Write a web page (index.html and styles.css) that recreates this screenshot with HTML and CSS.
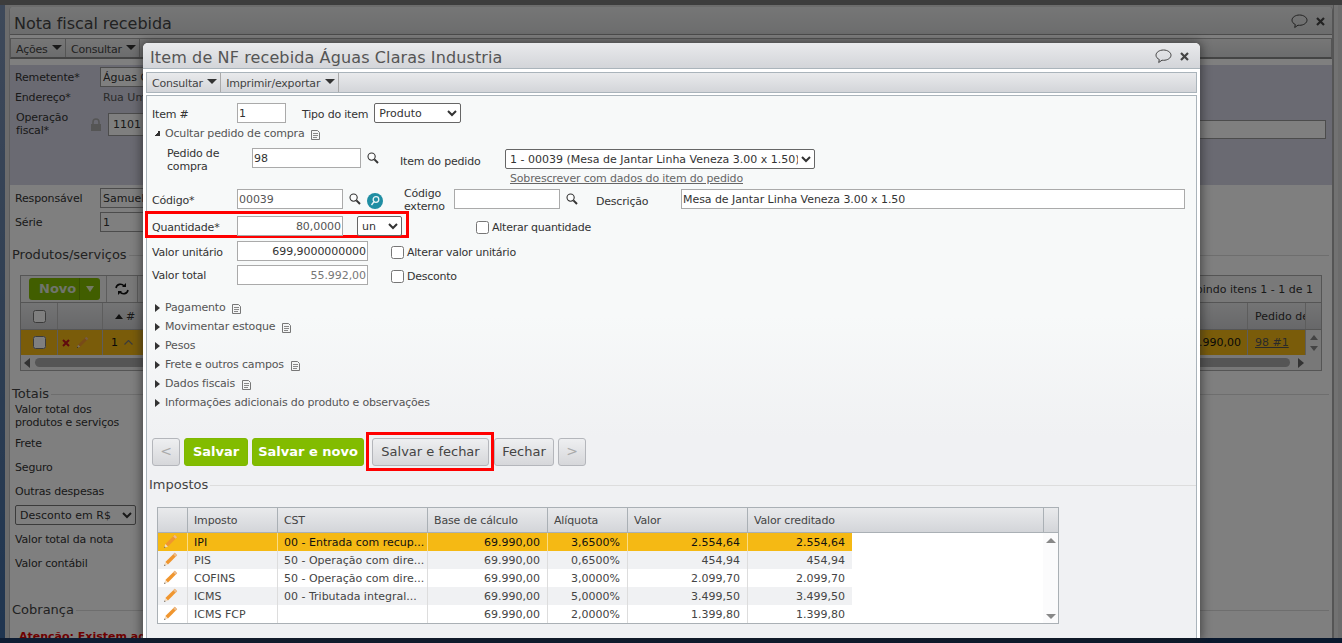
FILE: index.html
```html
<!DOCTYPE html>
<html lang="pt">
<head>
<meta charset="utf-8">
<title>Nota fiscal recebida</title>
<link rel="stylesheet" href="styles.css">
</head>
<body>
<svg width="0" height="0" class="defs">
  <symbol id="i-search" viewBox="0 0 12 12"><circle cx="4.6" cy="4.6" r="3.6" fill="#fff" fill-opacity=".6" stroke="#333" stroke-width="1.1"/><path d="M7.4 7.4l3.6 3.6" stroke="#333" stroke-width="2"/></symbol>
  <symbol id="i-note" viewBox="0 0 9 10"><path d="M.5.500h6l2 2v7h-8z" fill="#f4f5f5" stroke="#777"/><path d="M2 3.500h5M2 5.500h5M2 7.500h4" stroke="#888"/></symbol>
  <symbol id="i-pencil" viewBox="0 0 14 14"><path d="M11 .8l2.2 2.2-8.6 8.6-2.4-2.2z" fill="#f0962f"/><path d="M11 .8l2.2 2.2-1.5 1.500-2.2-2.200z" fill="#eabb8c"/><path d="M2.200 9.400l2.400 2.200-3.600 1.400z" fill="#f3dcc0"/><path d="M1.600 11.600l-.6 1.400 1.400-.6z" fill="#333"/></symbol>
  <symbol id="i-bubble" viewBox="0 0 17 15"><path d="M8.5 1C4.400 1 1 3.300 1 6.200c0 1.800 1.300 3.400 3.300 4.300l-.6 3 3.300-2.300c.5.100 1 .1 1.500.1 4.100 0 7.500-2.300 7.500-5.100S12.600 1 8.500 1z" fill="none" stroke="currentColor"/></symbol>
  <symbol id="i-close" viewBox="0 0 9 9"><path d="M1 1l7 7M8 1l-7 7" stroke="currentColor" stroke-width="2.200"/></symbol>
</svg>

<div class="desk">
  <div class="topstrip"></div>
  <div class="middle">
    <div class="sidebar"></div>
    <main class="win">
      <header class="win-title">
        <h1>Nota fiscal recebida</h1>
        <span class="win-actions">
          <svg class="ic-bubble"><use href="#i-bubble"/></svg>
          <svg class="ic-close"><use href="#i-close"/></svg>
        </span>
      </header>
      <nav class="win-bar">
        <span class="menu">Ações <i class="caret"></i></span>
        <span class="menu">Consultar <i class="caret"></i></span>
      </nav>
      <section class="tint">
        <div class="bg-row"><label class="bg-label">Remetente*</label><input class="bg-input w-remet" value="Águas Claras Industria"></div>
        <div class="bg-row r-end"><label class="bg-label">Endereço*</label><span class="addr">Rua Um</span></div>
        <div class="bg-row r-op">
          <label class="bg-label op-label">Operação<br>fiscal*</label>
          <svg class="lock" viewBox="0 0 12 13"><path d="M3 6V4a3 3 0 0 1 6 0v2" fill="none" stroke="#aaa" stroke-width="1.600"/><path d="M1 6h10v7H1z" fill="#aaa"/></svg>
          <input class="bg-input w-op" value="1101 - Compra">
          <input class="bg-input w-far">
        </div>
      </section>
      <div class="bg-row r-resp"><label class="bg-label">Responsável</label><input class="bg-input w-remet" value="Samuel"></div>
      <div class="bg-row r-serie"><label class="bg-label">Série</label><input class="bg-input w-remet" value="1"></div>

      <div class="legend l-prod"><span>Produtos/serviços</span></div>
      <div class="bg-grid">
        <div class="bg-grid-bar">
          <span class="novo"><b>Novo</b><i class="novo-arrow"></i></span>
          <span class="refresh-cell"><svg class="refresh" viewBox="0 0 14 12"><path d="M1 5a4.500 4.500 0 0 1 8-2M13 7a4.500 4.500 0 0 1-8 2" fill="none" stroke="#111" stroke-width="1.600"/><path d="M7 4h4V0zM7 8H3v4z" fill="#111"/></svg></span>
          <span class="grid-count">Exibindo itens 1 - 1 de 1</span>
        </div>
        <div class="bg-grid-head">
          <span class="c-check"><input type="checkbox"></span>
          <span class="c-act"></span>
          <span class="c-num"><i class="caret-up"></i> #</span>
          <span class="c-fill"></span>
          <span class="c-ped">Pedido de</span>
          <span class="c-sb"></span>
        </div>
        <div class="bg-grid-row">
          <span class="c-check"><input type="checkbox"></span>
          <span class="c-act"><svg class="ic-x" viewBox="0 0 8 8"><path d="M1 1l6 6M7 1l-6 6" stroke="#c0141c" stroke-width="2"/></svg><svg class="ic-pen-dim"><use href="#i-pencil"/></svg></span>
          <span class="c-num">1<svg class="chev" viewBox="0 0 9 5"><path d="M.5 4.500l4-4 4 4" fill="none" stroke="#777" stroke-width="1.200"/></svg></span>
          <span class="c-fill val">69.990,00</span>
          <span class="c-ped"><a>98 #1</a></span>
          <span class="c-sb sb-cell"><i class="arr-up"></i><i class="arr-down"></i></span>
        </div>
        <div class="bg-grid-scroll"><i class="arr-left"></i><span class="thumb"></span><i class="arr-right"></i></div>
      </div>

      <div class="legend l-tot"><span>Totais</span></div>
      <div class="bg-lines">
        <div class="t-two">Valor total dos<br>produtos e serviços</div>
        <div class="t-line first">Frete</div>
        <div class="t-line">Seguro</div>
        <div class="t-line">Outras despesas</div>
        <select class="t-select"><option>Desconto em R$</option></select>
        <div class="t-line first">Valor total da nota</div>
        <div class="t-line">Valor contábil</div>
      </div>
      <div class="legend l-cob"><span>Cobrança</span></div>
      <div class="alert">Atenção: Existem adiantamentos</div>
    </main>
    <div class="rail"></div>
  </div>
  <div class="botstrip"></div>
</div>

<div class="dim"></div>

<div class="modal">
  <header class="m-title">
    <h2>Item de NF recebida Águas Claras Industria</h2>
    <span class="win-actions">
      <svg class="ic-bubble"><use href="#i-bubble"/></svg>
      <svg class="ic-close"><use href="#i-close"/></svg>
    </span>
  </header>
  <nav class="m-bar">
    <span class="menu">Consultar <i class="caret"></i></span>
    <span class="menu">Imprimir/exportar <i class="caret"></i></span>
  </nav>
  <div class="m-body">
    <div class="f-row r1">
      <label class="lb w85 d2">Item #</label>
      <input class="in w49" value="1">
      <label class="lb tipo">Tipo do item</label>
      <select class="sel w87"><option>Produto</option></select>
    </div>
    <div class="toggle open"><i class="tri-open"></i><span>Ocultar pedido de compra</span><svg class="ic-note"><use href="#i-note"/></svg></div>
    <div class="f-row r3">
      <label class="lb pedido">Pedido de<br>compra</label>
      <input class="in w109" value="98">
      <svg class="ic-search"><use href="#i-search"/></svg>
      <label class="lb item-ped">Item do pedido</label>
      <div class="sel-stack">
        <select class="sel w310"><option>1 - 00039 (Mesa de Jantar Linha Veneza 3.00 x 1.50)</option></select>
        <a class="over">Sobrescrever com dados do item do pedido</a>
      </div>
    </div>
    <div class="f-row r4">
      <label class="lb w85 d2">Código*</label>
      <input class="in w106 muted" value="00039">
      <svg class="ic-search"><use href="#i-search"/></svg>
      <svg class="ic-key" viewBox="0 0 16 16"><circle cx="8" cy="8" r="8" fill="#1f8ea3"/><circle cx="9" cy="6.500" r="2.800" fill="none" stroke="#e8f4f6" stroke-width="1.300"/><path d="M7 8.600L4.500 12" stroke="#e8f4f6" stroke-width="1.400"/></svg>
      <label class="lb ext">Código<br>externo</label>
      <input class="in w106">
      <svg class="ic-search"><use href="#i-search"/></svg>
      <label class="lb desc">Descrição</label>
      <input class="in w504" value="Mesa de Jantar Linha Veneza 3.00 x 1.50">
    </div>
    <div class="f-row r5">
      <div class="hl-qty">
        <label class="lb qty-l">Quantidade*</label>
        <input class="in w106 right muted" value="80,0000">
        <select class="sel w45"><option>un</option></select>
      </div>
      <label class="chk c1"><input type="checkbox">Alterar quantidade</label>
    </div>
    <div class="f-row r6">
      <label class="lb w85 d1">Valor unitário</label>
      <input class="in w131 right" value="699,9000000000">
      <label class="chk c2"><input type="checkbox">Alterar valor unitário</label>
    </div>
    <div class="f-row r7">
      <label class="lb w85">Valor total</label>
      <input class="in w131 right grey" value="55.992,00">
      <label class="chk c2"><input type="checkbox">Desconto</label>
    </div>
    <div class="sections">
      <div class="toggle"><i class="tri"></i><span>Pagamento</span><svg class="ic-note"><use href="#i-note"/></svg></div>
      <div class="toggle"><i class="tri"></i><span>Movimentar estoque</span><svg class="ic-note"><use href="#i-note"/></svg></div>
      <div class="toggle"><i class="tri"></i><span>Pesos</span></div>
      <div class="toggle"><i class="tri"></i><span>Frete e outros campos</span><svg class="ic-note"><use href="#i-note"/></svg></div>
      <div class="toggle"><i class="tri"></i><span>Dados fiscais</span><svg class="ic-note"><use href="#i-note"/></svg></div>
      <div class="toggle"><i class="tri"></i><span>Informações adicionais do produto e observações</span></div>
    </div>
    <div class="actions">
      <button class="btn nav">&lt;</button>
      <button class="btn green b-s">Salvar</button>
      <button class="btn green b-sn">Salvar e novo</button>
      <span class="hl-btn"><button class="btn b-sf">Salvar e fechar</button></span>
      <button class="btn b-f">Fechar</button>
      <button class="btn nav">&gt;</button>
    </div>
    <div class="m-legend"><span>Impostos</span></div>
    <div class="tax">
      <div class="tax-head">
        <span></span><span>Imposto</span><span>CST</span><span>Base de cálculo</span><span>Alíquota</span><span>Valor</span><span>Valor creditado</span><span></span>
      </div>
      <div class="tax-wrap">
        <div class="tax-rows">
          <div class="tax-row sel-row"><span class="pc"><svg class="ic-pen"><use href="#i-pencil"/></svg></span><span>IPI</span><span>00 - Entrada com recup...</span><span class="n">69.990,00</span><span class="n">3,6500%</span><span class="n">2.554,64</span><span class="n">2.554,64</span></div>
          <div class="tax-row alt"><span class="pc"><svg class="ic-pen"><use href="#i-pencil"/></svg></span><span>PIS</span><span>50 - Operação com dire...</span><span class="n">69.990,00</span><span class="n">0,6500%</span><span class="n">454,94</span><span class="n">454,94</span></div>
          <div class="tax-row"><span class="pc"><svg class="ic-pen"><use href="#i-pencil"/></svg></span><span>COFINS</span><span>50 - Operação com dire...</span><span class="n">69.990,00</span><span class="n">3,0000%</span><span class="n">2.099,70</span><span class="n">2.099,70</span></div>
          <div class="tax-row alt"><span class="pc"><svg class="ic-pen"><use href="#i-pencil"/></svg></span><span>ICMS</span><span>00 - Tributada integral...</span><span class="n">69.990,00</span><span class="n">5,0000%</span><span class="n">3.499,50</span><span class="n">3.499,50</span></div>
          <div class="tax-row"><span class="pc"><svg class="ic-pen"><use href="#i-pencil"/></svg></span><span>ICMS FCP</span><span></span><span class="n">69.990,00</span><span class="n">2,0000%</span><span class="n">1.399,80</span><span class="n">1.399,80</span></div>
        </div>
        <div class="tax-sb"><i class="arr-up g"></i><i class="arr-down g"></i></div>
      </div>
    </div>
  </div>
</div>
</body>
</html>
```

FILE: styles.css
```css
* { box-sizing: border-box; }
html, body { margin: 0; height: 643px; overflow: hidden; }
body { position: relative; width: 1342px; font: 11px/13px "DejaVu Sans", sans-serif; color: #333; background: #fff; }
.defs { position: absolute; }
input, select, button { font: inherit; margin: 0; }
h1, h2 { margin: 0; font-weight: 400; }

/* background page */
.desk { height: 643px; display: flex; flex-direction: column; }
.topstrip { height: 5px; background: #7a7a7a; }
.middle { flex: 1; display: flex; min-height: 0; background: #d8d8d8; }
.sidebar { width: 5px; background: linear-gradient(#7d93b4, #5f7ea6 50%, #3f6aa0); margin-right: 4px; }
.win { width: 1324px; margin-top: 2px; border-left: 1px solid #bbb; border-right: 1px solid #aaa; background: #fff; border-radius: 4px 4px 0 0; overflow: hidden; }
.rail { width: 5px; background: #e4e4e4; border-left: 1px solid #aaa; }
.botstrip { height: 5px; background: linear-gradient(90deg, #1d3a66, #12305a); }
.win-title { height: 28px; padding: 7px 7px 0 4px; display: flex; justify-content: space-between; background: linear-gradient(#eceded, #d9dadb); border-bottom: 1px solid #999; }
.win-title h1 { font-size: 16px; line-height: 20px; color: #444; letter-spacing: -.05px; }
.win-actions { display: flex; align-items: center; gap: 8px; color: #444; height: 15px; margin-top: 1px; }
.win-title .win-actions { margin-top: 0; }
.ic-bubble { width: 17px; height: 15px; }
.ic-close { width: 9px; height: 9px; }
.win-bar { height: 21px; margin-top: 3px; display: flex; border: 1px solid #aaa; background: linear-gradient(#eee, #d8d9db); border-bottom: 2px solid #888; }
.menu { padding: 4px 3px 0 5px; border-right: 1px solid #aaa; white-space: nowrap; color: #444; letter-spacing: -.2px; }
.caret { display: inline-block; border: 5px solid transparent; border-top: 5px solid #333; border-bottom: 0; margin-left: 1px; vertical-align: 3px; }
.tint { height: 120px; margin-top: 6px; padding: 2px 6px 0 5px; background: #d5d5e4; position: relative; }
.bg-row { display: flex; align-items: center; }
.bg-label { width: 85px; flex: none; white-space: nowrap; letter-spacing: -.15px; }
.bg-input { height: 20px; padding: 0 2px; border: 1px solid #999; background: #fff; color: #333; }
.w-remet { width: 300px; }
.r-end { margin-top: 3px; height: 15px; }
.addr { margin-left: 3px; color: #555; }
.r-op { margin-top: 4px; }
.op-label { width: 74px; margin-left: 1px; }
.lock { width: 12px; height: 13px; margin-right: 6px; }
.w-op { width: 300px; height: 23px; padding-left: 4px; }
.w-far { width: 807px; margin-left: 112px; height: 19px; align-self: flex-start; margin-top: 11px; background: #fff; }
.r-resp { padding-left: 5px; margin-top: 3px; height: 20px; }
.r-serie { padding-left: 5px; margin-top: 4px; height: 20px; }
.legend { display: flex; align-items: center; padding-left: 2px; font-size: 13px; line-height: 16px; color: #444; }
.legend::after { content: ""; flex: 1; height: 1px; background: #ddd; margin-left: 2px; margin-right: 3px; }
.l-prod { margin-top: 15px; }
.bg-grid { margin: 12px 10px 0 10px; width: 1302px; border: 1px solid #aaa; }
.bg-grid-bar { height: 27px; display: flex; align-items: center; padding: 0 8px; border-bottom: 1px solid #aaa; background: #f2f2f2; }
.novo { width: 71px; height: 22px; display: flex; align-items: center; background: #82bc00; border-radius: 3px; color: #dfe8d8; font-size: 13px; font-weight: 700; padding-left: 10px; }
.novo b { width: 41px; height: 22px; line-height: 22px; border-right: 1px solid #6f9f00; }
.novo-arrow { border: 4px solid transparent; border-top: 6px solid #e6f2c8; border-bottom: 0; margin-left: 6px; }
.refresh-cell { display: flex; align-items: center; justify-content: center; width: 32px; height: 26px; margin-left: 6px; border-left: 1px solid #bbb; border-right: 1px solid #bbb; }
.refresh { width: 14px; height: 12px; }
.grid-count { margin-left: auto; }
.bg-grid-head, .bg-grid-row { display: flex; align-items: stretch; }
.bg-grid-head { height: 27px; background: linear-gradient(#e8e9ea, #cfd0d3); border-bottom: 1px solid #aaa; }
.bg-grid-row { height: 25px; background: #f5b914; color: #111; }
.bg-grid-head span, .bg-grid-row span { display: flex; align-items: center; border-right: 1px solid #bbb; }
.c-check { width: 37px; justify-content: center; }
.c-act { width: 45px; padding-left: 4px; gap: 6px; }
.c-num { width: 60px; padding-left: 8px; }
.bg-grid-head .c-num { padding-left: 12px; }
.chev { width: 9px; height: 5px; margin-left: 6px; }
.c-fill { flex: 1; justify-content: flex-end; padding-right: 6px; }
.c-ped { width: 58px; padding-left: 7px; overflow: hidden; white-space: nowrap; }
.c-ped a { text-decoration: underline; color: #555; }
.c-sb { width: 15px; border-right: 0 !important; }
.sb-cell { flex-direction: column; justify-content: center; gap: 6px; background: #f0f0f0; }
.caret-up { border: 4px solid transparent; border-bottom: 5px solid #222; border-top: 0; margin-right: 3px; }
.ic-x { width: 8px; height: 8px; }
.ic-pen-dim { width: 13px; height: 13px; }
.bg-grid-scroll { height: 15px; display: flex; align-items: center; padding: 0 17px 0 3px; background: #f0f0f0; }
.thumb { flex: 1; height: 9px; margin: 0 8px 0 5px; border-radius: 5px; background: #aaa; }
.arr-left { border: 5px solid transparent; border-right: 6px solid #666; border-left: 0; }
.arr-right { border: 5px solid transparent; border-left: 6px solid #666; border-right: 0; }
.arr-up { display: block; border: 4px solid transparent; border-bottom: 5px solid #888; border-top: 0; }
.arr-down { display: block; border: 4px solid transparent; border-top: 5px solid #888; border-bottom: 0; }
.l-tot { margin-top: 15px; }
.bg-lines { padding-left: 5px; letter-spacing: -.18px; }
.t-two { margin-top: 1px; }
.t-line { margin-top: 11px; }
.t-line.first { margin-top: 8px; }
.t-select { display: block; width: 121px; height: 20px; margin-top: 7px; background: #fff; color: #333; border: 1px solid #777; border-radius: 2px; }
.l-cob { margin-top: 32px; }
.alert { margin: 12px 0 0 9px; color: #d00; font-weight: 700; white-space: nowrap; }

.dim { position: absolute; inset: 0; background: rgba(0, 0, 0, .5); }

/* modal */
.modal { position: absolute; left: 143px; top: 43px; width: 1057px; height: 595px; padding: 0 3px; background: #fff; border-radius: 5px 5px 0 0; box-shadow: 0 0 10px 2px rgba(30, 30, 30, .55); overflow: hidden; }
.m-title { margin: 0 -3px; height: 26px; padding: 5px 11px 0 7px; display: flex; justify-content: space-between; background: linear-gradient(#e9eaec, #d3d5d9); border-bottom: 1px solid #aab4bb; }
.m-title h2 { font-size: 16px; line-height: 20px; color: #555; letter-spacing: .12px; }
.m-bar { height: 21px; margin-top: 3px; display: flex; border: 1px solid #aab4bb; background: linear-gradient(#e9eaec, #d3d5d9); }
.m-body { height: 549px; margin-top: 2px; padding: 7px 5px 0; border: 1px solid #aab4bb; border-bottom: 0; background: linear-gradient(#f7f9f9, #f7f9f9 40%, #f0f1f3 62%); }
.f-row { display: flex; align-items: center; }
.lb { flex: none; color: #333; white-space: nowrap; letter-spacing: -.2px; }
.d2 { padding-top: 3px; }
.d1 { padding-top: 2px; }
.w85 { width: 85px; }
.in { flex: none; height: 20px; padding: 0 1px; border: 1px solid #aaa; background: #fff; color: #333; border-radius: 0; outline: 0; letter-spacing: -.06px; }
.sel { flex: none; height: 20px; padding: 0; border: 1px solid #666; background: #fff; color: #333; border-radius: 2px; }
.right { text-align: right; }
.muted { color: #555; }
.grey { color: #777; }
.w49 { width: 49px; }
.w87 { width: 87px; }
.w109 { width: 109px; }
.w106 { width: 106px; }
.w504 { width: 504px; }
.w310 { width: 310px; display: block; }
.w45 { width: 45px; }
.w131 { width: 131px; }
.tipo { margin: 3px 6px 0 16px; }
.toggle { display: flex; align-items: center; height: 19px; color: #555; white-space: nowrap; letter-spacing: -.18px; }
.toggle > span { margin-left: 5px; }
.toggle.open { height: 20px; margin-left: 2px; }
.tri { border: 4px solid transparent; border-left: 5px solid #333; border-right: 0; margin-left: 3px; }
.tri-open { width: 6px; height: 6px; background: linear-gradient(135deg, transparent 50%, #333 50%); }
.ic-note { width: 9px; height: 10px; margin: 3px 0 0 7px; }
.ic-search { flex: none; width: 12px; height: 12px; margin-left: 6px; }
.r3 { margin-top: 5px; height: 38px; align-items: flex-start; }
.pedido { width: 85px; margin: -1px 0 0 15px; }
.item-ped { margin: 7px 0 0 21px; width: 105px; }
.r3 .ic-search { margin-top: 4px; }
.sel-stack { padding-top: 1px; }
.over { display: block; margin: 3px 0 0 5px; color: #666; text-decoration: underline; white-space: nowrap; letter-spacing: -.17px; }
.r4 { margin-top: 3px; height: 20px; }
.ic-key { flex: none; width: 16px; height: 16px; margin: 3px 0 0 6px; }
.ext { margin: 2px 0 0 21px; width: 50px; }
.desc { margin: 4px 0 0 18px; width: 85px; }
.r5 { margin-top: 2px; height: 27px; align-items: flex-start; }
.hl-qty { display: flex; align-items: flex-start; width: 264px; height: 27px; margin-left: -7px; padding: 2px 0 0 4px; border: 3px solid #f00; }
.qty-l { width: 85px; margin-top: 5px; }
.hl-qty .sel { margin-left: 14px; }
.chk { display: flex; align-items: center; color: #333; white-space: nowrap; letter-spacing: -.25px; }
.chk input { width: 13px; height: 13px; margin: 0 3px 0 0; }
.c1 { margin: 10px 0 0 67px; }
.c2 { margin: 2px 0 0 23px; }
.r6 { margin-top: 3px; height: 20px; }
.r7 { margin-top: 4px; height: 20px; }
.sections { margin-top: 13px; }
.actions { display: flex; align-items: center; gap: 4px; margin-top: 20px; height: 39px; }
.btn { height: 28px; padding: 0; border: 1px solid #b4b6bb; border-radius: 3px; background: linear-gradient(#eeeff1, #d6d7da); color: #444; font-size: 13px; }
.nav { width: 28px; color: #aaa; font-size: 14px; }
.green { border-color: #7eb800; background: #82bc00; color: #fff; font-weight: 700; font-size: 13px; }
.b-s { width: 64px; }
.b-sn { width: 112px; }
.hl-btn { display: flex; align-items: center; width: 128px; height: 39px; margin: 0 0 0 -2px; padding-left: 3px; border: 3px solid #f00; }
.b-sf { width: 117px; }
.b-f { width: 60px; margin-left: -4px; }
.m-legend { display: flex; align-items: center; margin: 7px -5px 0 -3px; font-size: 13px; line-height: 14px; color: #444; }
.m-legend::after { content: ""; flex: 1; height: 1px; background: #ddd; margin-left: 2px; }
.tax { width: 902px; margin: 15px 0 0 5px; border: 1px solid #aab0b5; }
.tax-head { display: grid; grid-template-columns: 30px 90px 150px 120px 80px 120px 296px 15px; height: 25px; background: linear-gradient(#e9eaec, #d3d5d9); border-bottom: 1px solid #aab0b5; }
.tax-head span { padding: 6px 6px 0; border-right: 1px solid #aab0b5; color: #444; white-space: nowrap; letter-spacing: -.15px; }
.tax-head span:last-child { border-right: 0; }
.tax-wrap { display: flex; justify-content: space-between; background: #fff; }
.tax-row { display: grid; grid-template-columns: 30px 90px 150px 120px 80px 120px 104px; height: 18px; color: #444; }
.tax-row span { padding: 3px 6px 0; border-right: 1px solid #ddd; white-space: nowrap; overflow: hidden; }
.tax-row span:last-child { border-right: 0; }
.tax-row .n { text-align: right; padding-right: 7px; }
.tax-row .pc { padding: 1px 0 0 5px; }
.ic-pen { width: 15px; height: 15px; display: block; }
.alt { background: #f0f1f3; }
.sel-row { background: #f5b914; color: #111; }
.sel-row span { border-right-color: #f9dc86; }
.tax-sb { width: 15px; display: flex; flex-direction: column; align-items: center; justify-content: space-between; padding: 5px 0 4px; background: #fbfbfc; }
.arr-up.g, .arr-down.g { border-left-width: 5px; border-right-width: 5px; }
```
